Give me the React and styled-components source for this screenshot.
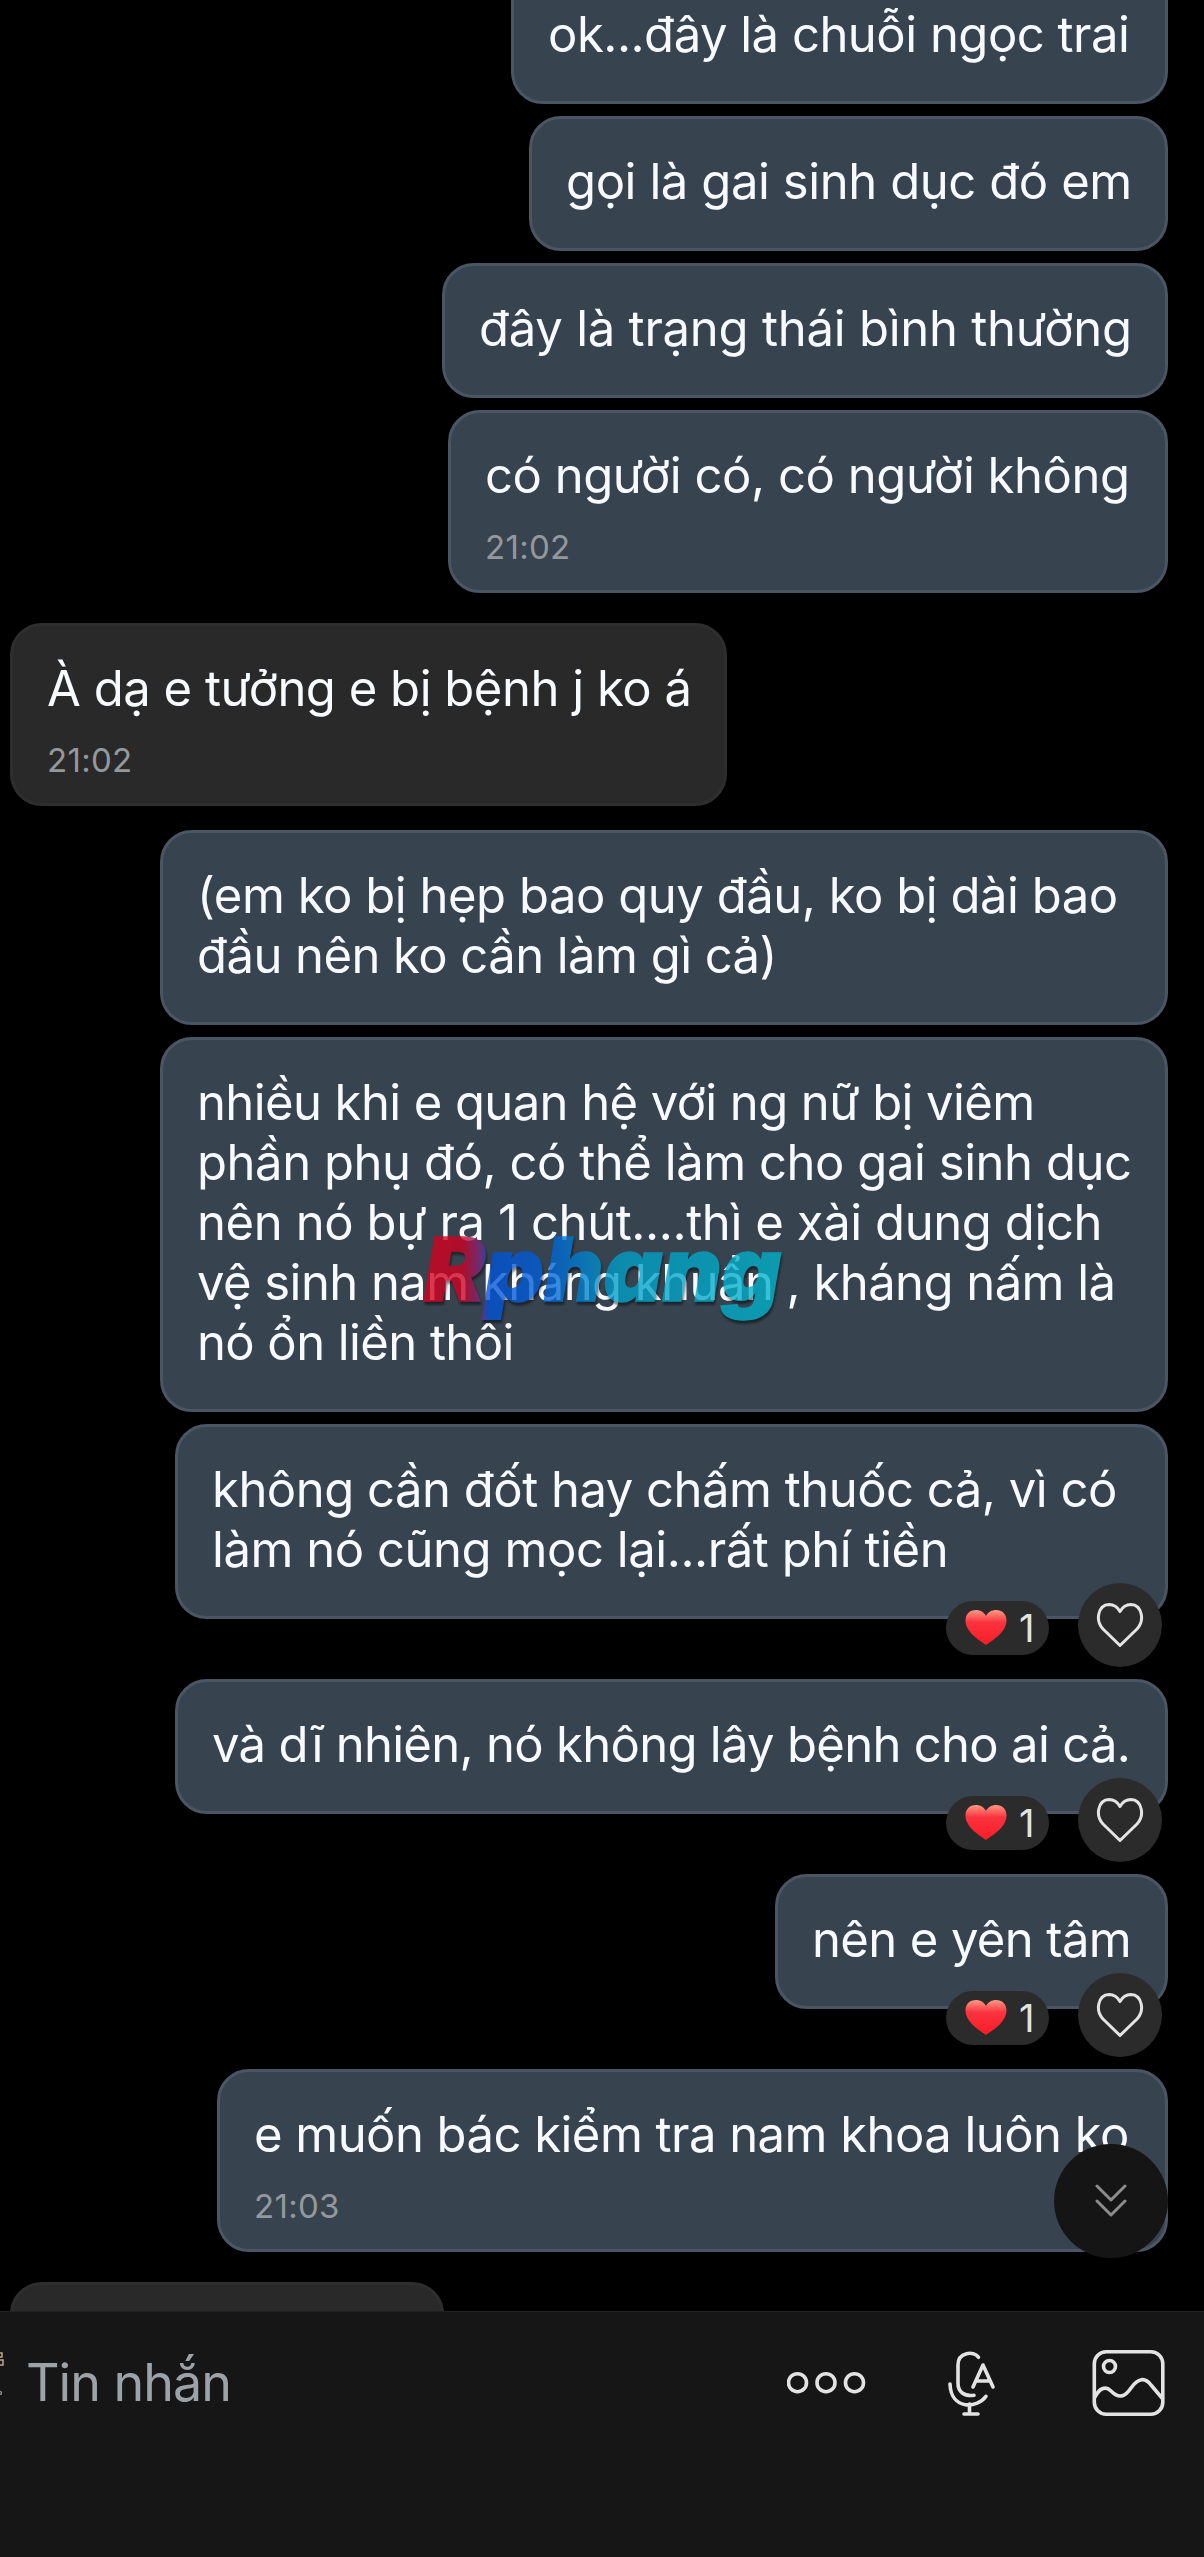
import React from 'react';
import styled, { createGlobalStyle } from 'styled-components';

const GlobalStyle = createGlobalStyle`
  * {
    box-sizing: border-box;
  }

  body {
    margin: 0;
    background: #000;
  }
`;

const Screen = styled.div`
  display: flex;
  flex-direction: column;
  width: 1204px;
  height: 2557px;
  overflow: hidden;
  background: #000;
  font-family: Inter, "Noto Sans", sans-serif;
`;

const Thread = styled.main`
  flex: none;
  display: flex;
  flex-direction: column;
  position: relative;
  height: 2311px;
  padding: 0 36px 0 10px;
  overflow: hidden;
`;

const Bubble = styled.div`
  flex: none;
  position: relative;
  align-self: ${props => props.$mine ? 'flex-end' : 'flex-start'};
  width: ${props => props.$width}px;
  margin-top: ${props => props.$gap}px;
  padding: 33px 0 ${props => props.$timed ? '23px' : '36px'} 34px;
  border: 3px solid ${props => props.$mine ? '#4b5665' : '#2e2e2e'};
  border-radius: 32px;
  background: ${props => props.$mine ? '#37434f' : '#292929'};
`;

const Line = styled.div`
  height: 60px;
  line-height: 60px;
  font-size: 49px;
  letter-spacing: ${props => props.$track || 0}px;
  white-space: pre;
  color: #f7faff;
`;

const Time = styled.div`
  height: 40px;
  margin-top: 21px;
  line-height: 40px;
  font-size: 33px;
  letter-spacing: .3px;
  color: #94989c;
`;

const Reactions = styled.div`
  position: absolute;
  right: 3px;
  bottom: -51px;
  display: flex;
  align-items: center;
  gap: 29px;
`;

const Count = styled.div`
  display: flex;
  align-items: center;
  gap: 12px;
  width: 103px;
  height: 54px;
  margin-top: 5px;
  padding-left: 19px;
  border-radius: 27px;
  background: #2b2b2b;
  font-size: 38px;
  color: #e2e2e2;
`;

const HeartButton = styled.div`
  display: flex;
  align-items: center;
  justify-content: center;
  width: 84px;
  height: 84px;
  border-radius: 50%;
  background: #2b2b2b;
`;

const ScrollDown = styled.div`
  position: absolute;
  left: 1054px;
  top: 2144px;
  display: flex;
  align-items: center;
  justify-content: center;
  width: 114px;
  height: 114px;
  border-radius: 50%;
  background: #151515;
`;

const Watermark = styled.svg`
  position: absolute;
  left: 415px;
  top: 1220px;
  overflow: visible;
  opacity: .78;
  filter: drop-shadow(1px 3px 1px rgba(0, 0, 0, .6));
`;

const InputBar = styled.footer`
  flex: 1;
  display: flex;
  align-items: flex-start;
  border-top: 1px solid #222;
  background: #161616;
`;

const Sticker = styled.svg`
  flex: none;
  margin-top: 38px;
`;

const Placeholder = styled.div`
  flex: 1;
  margin: 37px 0 0 22px;
  line-height: 68px;
  font-size: 52px;
  letter-spacing: -1px;
  color: #9ca3a8;
`;

const Tools = styled.div`
  display: flex;
  align-items: flex-start;
  padding-top: 28px;
  padding-right: 29px;

  svg {
    display: block;
  }
`;

const messages = [
  { mine: true, width: 657, gap: -31, lines: ['ok...đây là chuỗi ngọc trai'], track: [-.5] },
  { mine: true, width: 639, gap: 12, lines: ['gọi là gai sinh dục đó em'], track: [-.42] },
  { mine: true, width: 726, gap: 12, lines: ['đây là trạng thái bình thường'], track: [-.24] },
  { mine: true, width: 720, gap: 12, time: '21:02', lines: ['có người có, có người không'], track: [-.46] },
  { mine: false, width: 717, gap: 30, time: '21:02', lines: ['À dạ e tưởng e bị bệnh j ko á'], track: [-.48] },
  {
    mine: true,
    width: 1008,
    gap: 24,
    lines: ['(em ko bị hẹp bao quy đầu, ko bị dài bao', 'đầu nên ko cần làm gì cả)'],
    track: [-.47, -.56],
  },
  {
    mine: true,
    width: 1008,
    gap: 12,
    lines: [
      'nhiều khi e quan hệ với ng nữ bị viêm',
      'phần phụ đó, có thể làm cho gai sinh dục',
      'nên nó bự ra 1 chút....thì e xài dung dịch',
      'vệ sinh nam kháng khuẩn , kháng nấm là',
      'nó ổn liền thôi',
    ],
    track: [-.59, -.45, -.4, -.55, -.58],
  },
  {
    mine: true,
    width: 993,
    gap: 12,
    liked: true,
    lines: ['không cần đốt hay chấm thuốc cả, vì có', 'làm nó cũng mọc lại...rất phí tiền'],
    track: [-.5, -.45],
  },
  { mine: true, width: 993, gap: 60, liked: true, lines: ['và dĩ nhiên, nó không lây bệnh cho ai cả.'], track: [-.7] },
  { mine: true, width: 393, gap: 60, liked: true, lines: ['nên e yên tâm'], track: [-.62] },
  { mine: true, width: 951, gap: 60, time: '21:03', lines: ['e muốn bác kiểm tra nam khoa luôn ko'], track: [-.54] },
  { mine: false, width: 434, gap: 30, lines: [''] },
];

const RedHeart = () => (
  <svg width="42" height="37" viewBox="0 0 42 37">
    <defs>
      <linearGradient id="heart" x1="0" y1="0" x2="0" y2="1">
        <stop offset="0" stopColor="#ff9a84" />
        <stop offset=".35" stopColor="#fb3340" />
        <stop offset="1" stopColor="#f81d24" />
      </linearGradient>
    </defs>
    <path d="M21 36C14 31 .5 23 .5 11.500C.5 5 5 1 11 1c4 0 8 2 10 6 2-4 6-6 10-6 6 0 10.500 4 10.500 10.500C41.500 23 28 31 21 36z" fill="url(#heart)" />
  </svg>
);

const OutlineHeart = () => (
  <svg width="48" height="46" viewBox="0 0 48 46">
    <path d="M24 43.500L7 27C-1 18.500 2 3 13 2.500c5 0 8.500 2.500 11 7 2.500-4.500 6-7 11-7C46 3 49 18.500 41 27z" fill="none" stroke="#e4e4e4" strokeWidth="3" strokeLinejoin="round" />
  </svg>
);

const Message = ({ message }) => (
  <Bubble $mine={message.mine} $width={message.width} $gap={message.gap} $timed={message.time}>
    {message.lines.map((line, i) => (
      <Line key={i} $track={message.track && message.track[i]}>{line}</Line>
    ))}
    {message.time && <Time>{message.time}</Time>}
    {message.liked && (
      <Reactions>
        <Count><RedHeart />1</Count>
        <HeartButton><OutlineHeart /></HeartButton>
      </Reactions>
    )}
  </Bubble>
);

const Logo = () => (
  <Watermark width="390" height="130" viewBox="0 0 390 130">
    <defs>
      <linearGradient id="brand" gradientUnits="userSpaceOnUse" x1="0" y1="0" x2="366" y2="0">
        <stop offset="0" stopColor="#d8001c" />
        <stop offset=".13" stopColor="#d00020" />
        <stop offset=".18" stopColor="#7a2880" />
        <stop offset=".2" stopColor="#0052d8" />
        <stop offset=".36" stopColor="#0060d8" />
        <stop offset=".55" stopColor="#009fc8" />
        <stop offset="1" stopColor="#00b4cc" />
      </linearGradient>
    </defs>
    <text
      x="9"
      y="81"
      textLength="357"
      lengthAdjust="spacingAndGlyphs"
      fontFamily="Inter"
      fontSize="88"
      fontWeight="900"
      fontStyle="italic"
      fill="url(#brand)"
      stroke="url(#brand)"
      strokeWidth="1.500"
    >
      Rphang
    </text>
  </Watermark>
);

const App = () => {
  return (
    <React.Fragment>
      <GlobalStyle />
      <Screen>
        <Thread>
          {messages.map((message, i) => <Message key={i} message={message} />)}
          <Logo />
          <ScrollDown>
            <svg width="32" height="34" viewBox="0 0 32 34" fill="none" stroke="#8c8c8c" strokeWidth="3" strokeLinecap="round" strokeLinejoin="round">
              <path d="M2 2l14 14L30 2M2 17l14 14 14-14" />
            </svg>
          </ScrollDown>
        </Thread>
        <InputBar>
          <Sticker width="4" height="48" viewBox="0 0 4 48" fill="none" stroke="#b9a98a" strokeWidth="1.500">
            <path d="M0 3h2v4H0M0 10h3v5H0" />
            <circle cx="0" cy="43" r="1.500" stroke="#888" />
          </Sticker>
          <Placeholder>Tin nhắn</Placeholder>
          <Tools>
            <svg width="388" height="80" viewBox="0 0 388 80" fill="none" stroke="#e3e3e3" strokeWidth="3.600" strokeLinecap="round" strokeLinejoin="round">
              <circle cx="10.500" cy="42.700" r="9" />
              <circle cx="39" cy="42.700" r="9" />
              <circle cx="67.500" cy="42.700" r="9" />
              <path d="M191.500 17.300C187 10.500 171 12 171 25v18c0 9 6 13.500 16 12.300M163 44c1 27 28 24 36 12.300M182.500 64v10M177 74h14" />
              <path d="M186 47l10-22 10 22M190 41h12" />
              <rect x="307.300" y="11.700" width="68.500" height="62.500" rx="12" />
              <circle cx="322.500" cy="26.500" r="6" />
              <path d="M308 57c4-8 10-12 16-6 8 8 14 6 20-3 7-10 14-11 20-3l11 13" />
            </svg>
          </Tools>
        </InputBar>
      </Screen>
    </React.Fragment>
  );
};

export default App;
